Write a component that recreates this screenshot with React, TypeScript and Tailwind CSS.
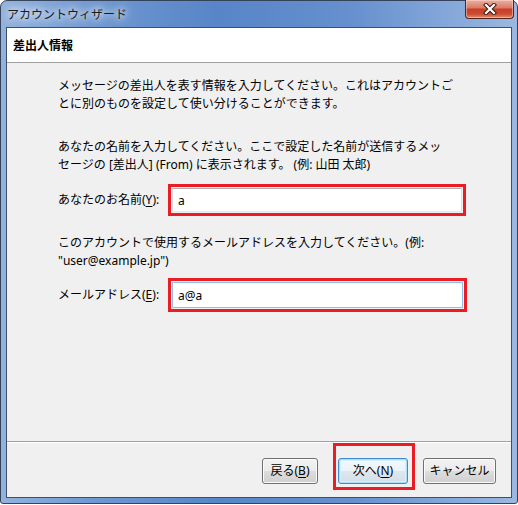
import React from "react";

type BtnProps = {
  before: string;
  accel?: string;
  after?: string;
  width: string;
  primary?: boolean;
};

// Win7 風のボタン
const WinButton: React.FC<BtnProps> = ({ before, accel, after, width, primary }) => {
  return (
    <button
      className={
        primary
          ? `${width} h-[26px] rounded-[3px] border border-[#3c8ccf] bg-[linear-gradient(#f4fafe_0%,#eaf3f9_48%,#dde7ef_52%,#d3dee7_100%)] shadow-[inset_0_0_0_1px_#a9def7,inset_0_0_0_2px_#d6f0fb] text-[12px] leading-[16px] text-black`
          : `${width} h-[26px] rounded-[3px] border border-[#707070] bg-[linear-gradient(#f2f2f2_0%,#ebebeb_48%,#dddddd_52%,#cfcfcf_100%)] shadow-[inset_0_0_0_1px_#fbfbfb] text-[12px] leading-[16px] text-black`
      }
    >
      {before}
      {accel && <span className="underline underline-offset-2">{accel}</span>}
      {after}
    </button>
  );
};

export default function App() {
  return (
    <div className="h-[505px] w-[518px] bg-white font-['Noto_Sans','Noto_Sans_CJK_JP',sans-serif] text-black">
      {/* ウィンドウ枠 */}
      <div className="flex h-[504px] w-[518px] flex-col rounded-t-[7px] rounded-b-[3px] border border-[#34435a] bg-[linear-gradient(90deg,#93b2de_0%,#6f98d1_18%,#5885c8_42%,#6690ce_68%,#9ab8e1_100%)] px-[5px] pb-[5px]">
        {/* タイトルバー */}
        <div className="-mx-[5px] -mt-px flex h-[27px] items-start justify-between pl-[6px] pr-[3px]">
          <span className="pt-[6px] font-['Noto_Sans_CJK_JP',sans-serif] text-[12px] leading-[16px] text-[#1b1b1b] [text-shadow:0_0_6px_#fff,0_0_10px_#fff,0_0_16px_rgba(255,255,255,0.9)]">
            アカウントウィザード
          </span>
          <div className="flex h-[19px] w-[49px] items-center justify-center rounded-b-[4px] border border-t-0 border-[#4b2620] bg-[linear-gradient(#eab1a4_0%,#dc7c66_42%,#c5402a_52%,#cd4a30_78%,#e38d70_100%)] shadow-[inset_0_0_0_1px_rgba(255,220,210,0.5)]">
            <svg width="14" height="12" viewBox="0 0 14 12">
              <path d="M3 2 L11 10 M11 2 L3 10" stroke="#3a1a14" strokeWidth="4.2" strokeLinecap="square" />
              <path d="M3 2 L11 10 M11 2 L3 10" stroke="#ffffff" strokeWidth="2.2" strokeLinecap="square" />
            </svg>
          </div>
        </div>

        {/* クライアント領域 */}
        <div className="flex h-[471px] flex-col border border-[#404f66] bg-[#f0f0f0]">
          <div className="flex h-[35px] shrink-0 items-center border-b border-[#a0a0a0] bg-white pl-[6px] font-['Noto_Sans_CJK_JP',sans-serif] text-[12px] font-bold">
            差出人情報
          </div>

          <div className="flex h-[378px] shrink-0 flex-col pl-[51px] pt-[14px] text-[12px] leading-[18px]">
            <p className="whitespace-nowrap">
              メッセージの差出人を表す情報を入力してください。これはアカウントご
              <br />
              とに別のものを設定して使い分けることができます。
            </p>
            <p className="mt-[25px] whitespace-nowrap">
              あなたの名前を入力してください。ここで設定した名前が送信するメッ
              <br />
              セージの [差出人] (From) に表示されます。 (例: 山田 太郎)
            </p>

            <div className="mt-[10px] flex items-center">
              <span className="w-[110px]">
                あなたのお名前(<span className="underline underline-offset-2">Y</span>):
              </span>
              <div className="h-[32px] w-[298px] border-[3px] border-[#ec1c24] p-px">
                <input
                  readOnly
                  value="a"
                  className="h-full w-full border border-[#abadb3] border-x-[#dbdfe6] border-b-[#e3e9ef] bg-white px-[5px] text-[12px] text-black outline-none"
                />
              </div>
            </div>

            <p className="mt-[18px] whitespace-nowrap">
              このアカウントで使用するメールアドレスを入力してください。(例:
              <br />
              "user@example.jp")
            </p>

            <div className="mt-[8px] flex items-center">
              <span className="w-[110px]">
                メールアドレス(<span className="underline underline-offset-2">E</span>):
              </span>
              <div className="h-[34px] w-[299px] border-[3px] border-[#ec1c24] p-px">
                <input
                  readOnly
                  value="a@a"
                  className="h-full w-full border border-[#8fc1e8] bg-white px-[5px] text-[12px] text-black outline-none"
                />
              </div>
            </div>
          </div>

          {/* 区切り線 */}
          <div className="h-px shrink-0 bg-[#a0a0a0]" />
          <div className="h-px shrink-0 bg-white" />

          {/* ボタン */}
          <div className="flex h-[53px] shrink-0 items-start justify-end pr-[15px]">
            <div className="mt-[14px]">
              <WinButton before="戻る(" accel="B" after=")" width="w-[56px]" />
            </div>
            <div className="ml-[15px] border-[3px] border-[#ec1c24] pb-[3px] pl-[2px] pr-[4px] pt-[11px]">
              <WinButton before="次へ(" accel="N" after=")" width="w-[70px]" primary />
            </div>
            <div className="ml-[8px] mt-[14px]">
              <WinButton before="キャンセル" width="w-[73px]" />
            </div>
          </div>
        </div>
      </div>
    </div>
  );
}
